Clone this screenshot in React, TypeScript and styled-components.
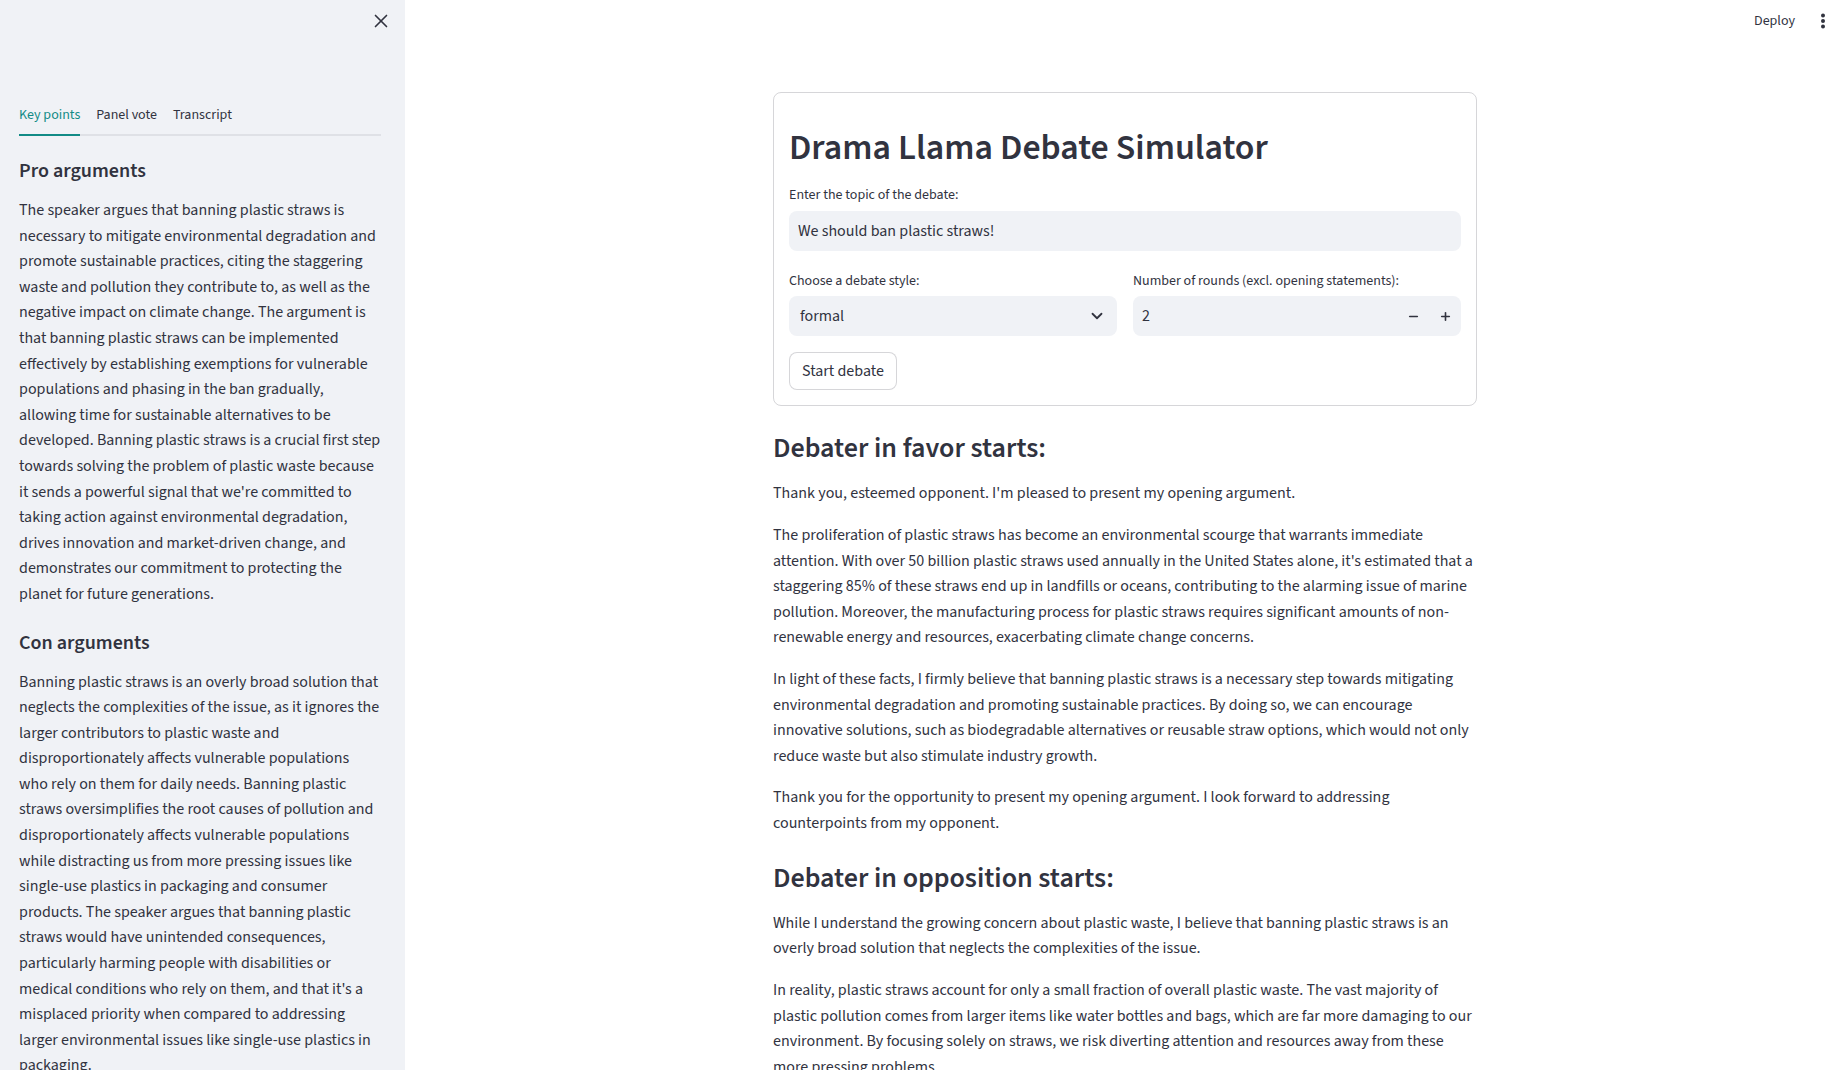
import React, { useState } from "react";
import styled, { createGlobalStyle } from "styled-components";
import { X, ChevronDown, Minus, Plus } from "lucide-react";

const TEXT = "#31333F";
const TEAL = "#128b86";
const FIELD = "#f0f2f6";

const GlobalStyle = createGlobalStyle`
  html, body {
    margin: 0;
    padding: 0;
    height: 100%;
    overflow: hidden;
    background: #ffffff;
  }
  body {
    font-family: "Source Sans 3", "Source Sans Pro", "Lato", sans-serif;
    color: ${TEXT};
    -webkit-font-smoothing: antialiased;
  }
  * { box-sizing: border-box; }
`;

const proText =
  "The speaker argues that banning plastic straws is necessary to mitigate environmental degradation and promote sustainable practices, citing the staggering waste and pollution they contribute to, as well as the negative impact on climate change. The argument is that banning plastic straws can be implemented effectively by establishing exemptions for vulnerable populations and phasing in the ban gradually, allowing time for sustainable alternatives to be developed. Banning plastic straws is a crucial first step towards solving the problem of plastic waste because it sends a powerful signal that we're committed to taking action against environmental degradation, drives innovation and market-driven change, and demonstrates our commitment to protecting the planet for future generations.";

const conText =
  "Banning plastic straws is an overly broad solution that neglects the complexities of the issue, as it ignores the larger contributors to plastic waste and disproportionately affects vulnerable populations who rely on them for daily needs. Banning plastic straws oversimplifies the root causes of pollution and disproportionately affects vulnerable populations while distracting us from more pressing issues like single-use plastics in packaging and consumer products. The speaker argues that banning plastic straws would have unintended consequences, particularly harming people with disabilities or medical conditions who rely on them, and that it's a misplaced priority when compared to addressing larger environmental issues like single-use plastics in packaging.";

const debate = [
  {
    heading: "Debater in favor starts:",
    paragraphs: [
      "Thank you, esteemed opponent. I'm pleased to present my opening argument.",
      "The proliferation of plastic straws has become an environmental scourge that warrants immediate attention. With over 50 billion plastic straws used annually in the United States alone, it's estimated that a staggering 85% of these straws end up in landfills or oceans, contributing to the alarming issue of marine pollution. Moreover, the manufacturing process for plastic straws requires significant amounts of non-renewable energy and resources, exacerbating climate change concerns.",
      "In light of these facts, I firmly believe that banning plastic straws is a necessary step towards mitigating environmental degradation and promoting sustainable practices. By doing so, we can encourage innovative solutions, such as biodegradable alternatives or reusable straw options, which would not only reduce waste but also stimulate industry growth.",
      "Thank you for the opportunity to present my opening argument. I look forward to addressing counterpoints from my opponent.",
    ],
  },
  {
    heading: "Debater in opposition starts:",
    paragraphs: [
      "While I understand the growing concern about plastic waste, I believe that banning plastic straws is an overly broad solution that neglects the complexities of the issue.",
      "In reality, plastic straws account for only a small fraction of overall plastic waste. The vast majority of plastic pollution comes from larger items like water bottles and bags, which are far more damaging to our environment. By focusing solely on straws, we risk diverting attention and resources away from these more pressing problems.",
    ],
  },
];

const tabs = ["Key points", "Panel vote", "Transcript"];

export default function App() {
  const [activeTab, setActiveTab] = useState(0);
  const [rounds, setRounds] = useState(2);

  return (
    <Page>
      <GlobalStyle />
      <Sidebar>
        <CloseRow>
          <IconButton aria-label="Close sidebar">
            <X size={22} strokeWidth={1.8} color={TEXT} />
          </IconButton>
        </CloseRow>
        <TabList>
          {tabs.map((t, i) => (
            <Tab key={t} $active={i === activeTab} onClick={() => setActiveTab(i)}>
              {t}
            </Tab>
          ))}
        </TabList>
        <SideHeading>Pro arguments</SideHeading>
        <SideText>{proText}</SideText>
        <SideHeading>Con arguments</SideHeading>
        <SideText>{conText}</SideText>
      </Sidebar>

      <Main>
        <Header>
          <DeployButton>Deploy</DeployButton>
          <MenuButton aria-label="Main menu">
            <svg width="8" height="16" viewBox="0 0 8 16">
              <circle cx="4" cy="2.5" r="2" fill={TEXT} />
              <circle cx="4" cy="8" r="2" fill={TEXT} />
              <circle cx="4" cy="13.5" r="2" fill={TEXT} />
            </svg>
          </MenuButton>
        </Header>

        <Content>
          <Form>
            <Title>Drama Llama Debate Simulator</Title>
            <Field>
              <Label>Enter the topic of the debate:</Label>
              <TextInput defaultValue="We should ban plastic straws!" />
            </Field>
            <Columns>
              <Field>
                <Label>Choose a debate style:</Label>
                <SelectBox>
                  <span>formal</span>
                  <ChevronDown size={18} strokeWidth={2.4} color={TEXT} />
                </SelectBox>
              </Field>
              <Field>
                <Label>Number of rounds (excl. opening statements):</Label>
                <NumberBox>
                  <NumberValue>{rounds}</NumberValue>
                  <StepButton aria-label="Decrement" onClick={() => setRounds((r) => Math.max(0, r - 1))}>
                    <Minus size={13} strokeWidth={3} color={TEXT} />
                  </StepButton>
                  <StepButton aria-label="Increment" onClick={() => setRounds((r) => r + 1)}>
                    <Plus size={13} strokeWidth={3} color={TEXT} />
                  </StepButton>
                </NumberBox>
              </Field>
            </Columns>
            <StartButton>Start debate</StartButton>
          </Form>

          {debate.map((section) => (
            <Section key={section.heading}>
              <SectionHeading>{section.heading}</SectionHeading>
              {section.paragraphs.map((p, i) => (
                <Paragraph key={i}>{p}</Paragraph>
              ))}
            </Section>
          ))}
        </Content>
      </Main>
    </Page>
  );
}

const Page = styled.div`
  display: flex;
  width: 100vw;
  height: 100vh;
  overflow: hidden;
`;

const Sidebar = styled.aside`
  flex: 0 0 405px;
  height: 100%;
  overflow: hidden;
  background: ${FIELD};
  padding: 0 24px 0 19px;
`;

const CloseRow = styled.div`
  height: 42px;
  display: flex;
  align-items: center;
  justify-content: flex-end;
  margin-right: -11px;
`;

const IconButton = styled.button`
  border: none;
  background: transparent;
  padding: 0;
  display: flex;
  cursor: pointer;
`;

const TabList = styled.div`
  margin-top: 54px;
  display: flex;
  gap: 16px;
  height: 40px;
  border-bottom: 2px solid #dfe1e6;
`;

const Tab = styled.button<{ $active: boolean }>`
  border: none;
  background: transparent;
  padding: 0;
  height: 40px;
  margin-bottom: -2px;
  font-family: inherit;
  font-size: 14px;
  color: ${({ $active }) => ($active ? TEAL : TEXT)};
  border-bottom: 2px solid ${({ $active }) => ($active ? TEAL : "transparent")};
  cursor: pointer;
`;

const SideHeading = styled.h3`
  margin: 23px 0 0;
  font-size: 20px;
  line-height: 24px;
  font-weight: 600;
  color: ${TEXT};
`;

const SideText = styled.p`
  margin: 15px 0 0;
  font-size: 16px;
  line-height: 1.6;
`;

const Main = styled.main`
  flex: 1;
  height: 100%;
  overflow: hidden;
  display: flex;
  flex-direction: column;
`;

const Header = styled.header`
  flex: 0 0 42px;
  display: flex;
  align-items: center;
  justify-content: flex-end;
  gap: 24px;
`;

const DeployButton = styled.button`
  border: none;
  background: transparent;
  padding: 0;
  font-family: inherit;
  font-size: 14px;
  color: ${TEXT};
  cursor: pointer;
`;

const MenuButton = styled.button`
  border: none;
  background: transparent;
  padding: 0;
  width: 8px;
  display: flex;
  cursor: pointer;
`;

const Content = styled.div`
  width: 704px;
  margin: 50px auto 0;
  position: relative;
  left: 9px;
  flex-shrink: 0;
`;

const Form = styled.div`
  border: 1px solid rgba(49, 51, 63, 0.2);
  border-radius: 8px;
  padding: 15px;
  display: flex;
  flex-direction: column;
  margin-bottom: 17px;
`;

const Title = styled.h2`
  margin: 0;
  padding: 18px 0 15px;
  font-size: 35.8px;
  line-height: 43.2px;
  font-weight: 600;
  color: ${TEXT};
`;

const Field = styled.div`
  display: flex;
  flex-direction: column;
  min-width: 0;
`;

const Label = styled.label`
  font-size: 14px;
  line-height: 22.4px;
  margin-bottom: 4px;
`;

const TextInput = styled.input`
  height: 40px;
  border: none;
  border-radius: 8px;
  background: ${FIELD};
  padding: 0 9px;
  font-family: inherit;
  font-size: 16px;
  color: ${TEXT};
  outline: none;
`;

const Columns = styled.div`
  display: grid;
  grid-template-columns: 1fr 1fr;
  gap: 16px;
  margin-top: 19px;
`;

const SelectBox = styled.div`
  height: 40px;
  border-radius: 8px;
  background: ${FIELD};
  display: flex;
  align-items: center;
  justify-content: space-between;
  padding: 0 11px 0 11px;
  font-size: 16px;
`;

const NumberBox = styled.div`
  height: 40px;
  border-radius: 8px;
  background: ${FIELD};
  display: flex;
  align-items: center;
  padding-left: 9px;
`;

const NumberValue = styled.span`
  flex: 1;
  font-size: 16px;
`;

const StepButton = styled.button`
  width: 32px;
  height: 40px;
  border: none;
  background: transparent;
  display: flex;
  align-items: center;
  justify-content: center;
  padding: 0;
  cursor: pointer;
`;

const StartButton = styled.button`
  align-self: flex-start;
  margin-top: 16px;
  height: 38px;
  padding: 0 12px;
  border: 1px solid rgba(49, 51, 63, 0.2);
  border-radius: 8px;
  background: #ffffff;
  font-family: inherit;
  font-size: 16px;
  color: ${TEXT};
  cursor: pointer;
`;

const Section = styled.section`
  display: flex;
  flex-direction: column;
`;

const SectionHeading = styled.h3`
  margin: 0;
  padding: 9.4px 0 15.4px;
  font-size: 28px;
  line-height: 1.2;
  font-weight: 600;
  color: ${TEXT};
`;

const Paragraph = styled.p`
  margin: 0 0 16px;
  font-size: 16px;
  line-height: 1.6;
`;
